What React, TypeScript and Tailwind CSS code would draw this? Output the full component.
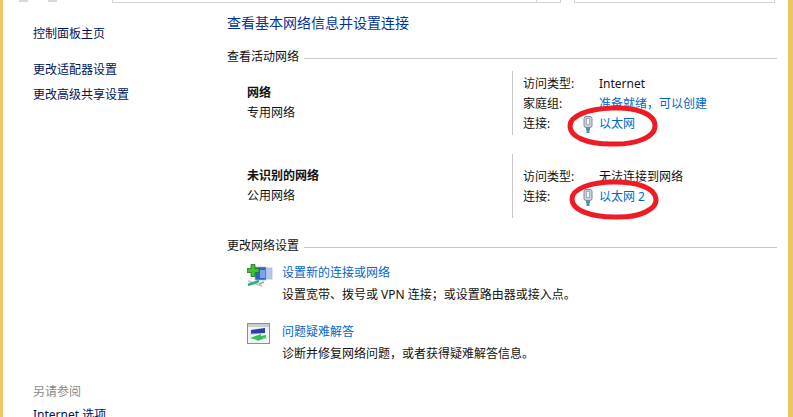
// App.tsx
const FONT = "font-['Noto_Sans','Noto_Sans_CJK_SC',sans-serif]";

function SectionHeader({ title }: { title: string }) {
  return (
    <div className="flex h-[18px] items-center gap-[5px] pr-[11px]">
      <span className="text-[12px] leading-[18px] text-[#111]">{title}</span>
      <span className="mt-[2px] h-px flex-1 bg-[#c8c8c8]" />
    </div>
  );
}

function NicIcon() {
  return (
    <svg width="10" height="17" viewBox="0 0 10 17" className="shrink-0">
      <rect x="1" y="0.5" width="8" height="11" rx="2" fill="#c9d3dc" stroke="#7f8b97" />
      <rect x="3.5" y="2.5" width="3" height="6" fill="#f4f7fa" stroke="#8c98a4" strokeWidth="0.7" />
      <rect x="3" y="11.5" width="4" height="2.5" fill="#5d8fb0" />
      <rect x="3.5" y="14" width="3" height="3" fill="#2a9bd0" />
    </svg>
  );
}

function NewConnectionIcon() {
  return (
    <svg width="26" height="24" viewBox="0 0 26 24">
      <rect x="15" y="4" width="10" height="11" fill="#b4c8ee" stroke="#aab4c4" strokeWidth="0.7" />
      <rect x="8" y="3" width="11" height="13" fill="#2f5fd0" stroke="#a9b3c2" strokeWidth="0.7" />
      <path d="M13 6h5v8h-5z" fill="#7fa2ea" />
      <path d="M4 0.5h4v4h4v4H8v4H4v-4H0v-4h4z" fill="#3fc13a" stroke="#1d7a1f" strokeWidth="0.8" />
      <path d="M1 17l14 5" stroke="#c4cbd2" strokeWidth="2" />
      <path d="M1 21l11-4" stroke="#2bb673" strokeWidth="2.5" />
      <path d="M12 20l5-2" stroke="#9aa3ac" strokeWidth="1.5" />
    </svg>
  );
}

function TroubleshootIcon() {
  return (
    <svg width="24" height="22" viewBox="0 0 24 22">
      <rect x="0.5" y="0.5" width="22" height="20" fill="#f2f3f4" stroke="#8a8f96" />
      <rect x="1" y="1" width="21" height="3" fill="#c9ccd1" />
      <path d="M4 7l14-2v5L4 11z" fill="#2c3fa8" />
      <path d="M3 15l11-4v2l5-1v3l-9 3v-1z" fill="#2fc25b" />
      <path d="M3 11h5M16 15h4" stroke="#b6bcc3" strokeWidth="1.2" />
    </svg>
  );
}

function InfoRow({ label, children }: { label: string; children: React.ReactNode }) {
  return (
    <div className="flex h-[20px] items-center text-[12px] text-[#111]">
      <span className="w-[76px] shrink-0">{label}</span>
      {children}
    </div>
  );
}

function NetworkBlock({
  name,
  kind,
  children,
}: {
  name: string;
  kind: string;
  children: React.ReactNode;
}) {
  return (
    <div className="flex pl-[20px]">
      <div className="w-[265px] shrink-0 pt-[12px] text-[12px] text-[#111]">
        <div className="h-[20px] font-bold leading-[20px]">{name}</div>
        <div className="h-[20px] leading-[20px]">{kind}</div>
      </div>
      <div className="h-[64px] w-px shrink-0 bg-[#c8c8c8]" />
      <div className="flex flex-1 flex-col justify-center pt-[2px] pl-[10px]">{children}</div>
    </div>
  );
}

function TaskRow({
  icon,
  link,
  text,
}: {
  icon: React.ReactNode;
  link: string;
  text: string;
}) {
  return (
    <div className="flex pl-[20px]">
      <div className="w-[35px] shrink-0">{icon}</div>
      <div className="text-[12px]">
        <div className="h-[18px] leading-[18px] text-[#0066cc]">{link}</div>
        <div className="mt-[4px] h-[18px] leading-[18px] text-[#111]">{text}</div>
      </div>
    </div>
  );
}

export default function App() {
  return (
    <div
      className={`${FONT} relative flex h-[417px] w-[793px] flex-col overflow-hidden border-r-[5px] border-l-[3px] border-[#eec468] bg-white`}
    >
      {/* back/forward buttons and address + search boxes cut off by the crop */}
      <div className="flex h-[3px] shrink-0 pl-[16px]">
        <span className="h-[2px] w-[9px] bg-[#d8d8d8]" />
        <span className="ml-[20px] h-[2px] w-[9px] bg-[#d8d8d8]" />
        <div className="ml-[55px] flex w-[449px] justify-end border-x border-b border-[#d4d4d4]">
          <div className="w-[24px] border-l border-[#d4d4d4]" />
        </div>
        <div className="ml-[13px] w-[201px] border-x border-b border-[#d4d4d4]" />
      </div>

      <div className="flex min-h-0 flex-1">
        <aside className="flex w-[224px] shrink-0 flex-col pl-[30px] text-[12px] text-[#00135b]">
          <div className="mt-[22px] h-[18px] leading-[18px]">控制面板主页</div>
          <div className="mt-[18px] h-[18px] leading-[18px]">更改适配器设置</div>
          <div className="mt-[7px] h-[18px] leading-[18px]">更改高级共享设置</div>
          <div className="mt-[279px] h-[18px] leading-[18px] text-[#8a8a8a]">另请参阅</div>
          <div className="mt-[5px] h-[18px] leading-[18px]">Internet 选项</div>
        </aside>

        <main className="flex min-w-0 flex-1 flex-col">
          <h1 className="mt-[9px] h-[22px] text-[14px] leading-[22px] font-normal text-[#003399]">
            查看基本网络信息并设置连接
          </h1>
          <div className="mt-[14px]">
            <SectionHeader title="查看活动网络" />
          </div>
          <div className="mt-[5px]">
            <NetworkBlock name="网络" kind="专用网络">
              <InfoRow label="访问类型:">Internet</InfoRow>
              <InfoRow label="家庭组:">
                <span className="text-[#0066cc]">准备就绪，可以创建</span>
              </InfoRow>
              <InfoRow label="连接:">
                <span className="-ml-[16px] flex items-center gap-[6px] text-[#0066cc]">
                  <NicIcon />
                  以太网
                </span>
              </InfoRow>
            </NetworkBlock>
          </div>
          <div className="mt-[19px]">
            <NetworkBlock name="未识别的网络" kind="公用网络">
              <InfoRow label="访问类型:">无法连接到网络</InfoRow>
              <InfoRow label="连接:">
                <span className="-ml-[16px] flex items-center gap-[6px] text-[#0066cc]">
                  <NicIcon />
                  以太网 2
                </span>
              </InfoRow>
            </NetworkBlock>
          </div>
          <div className="mt-[19px]">
            <SectionHeader title="更改网络设置" />
          </div>
          <div className="mt-[9px]">
            <TaskRow
              icon={<NewConnectionIcon />}
              link="设置新的连接或网络"
              text="设置宽带、拨号或 VPN 连接；或设置路由器或接入点。"
            />
          </div>
          <div className="mt-[19px]">
            <TaskRow
              icon={<TroubleshootIcon />}
              link="问题疑难解答"
              text="诊断并修复网络问题，或者获得疑难解答信息。"
            />
          </div>
        </main>
      </div>

      {/* red marker circles drawn on top of the screenshot */}
      <svg
        width="793"
        height="417"
        viewBox="0 0 793 417"
        className="pointer-events-none absolute top-0 -left-[3px]"
      >
        <path
          d="M612 108c-25 1-42 8-42 18 0 11 17 18 41 18 25 1 44-7 44-18 0-12-18-19-43-18z"
          fill="none"
          stroke="#ed1c24"
          strokeWidth="5"
        />
        <path
          d="M614 182c-24 0-42 7-42 17 0 11 18 18 43 18 25 1 42-8 41-18-1-11-18-17-42-17z"
          fill="none"
          stroke="#ed1c24"
          strokeWidth="5"
        />
      </svg>
    </div>
  );
}
